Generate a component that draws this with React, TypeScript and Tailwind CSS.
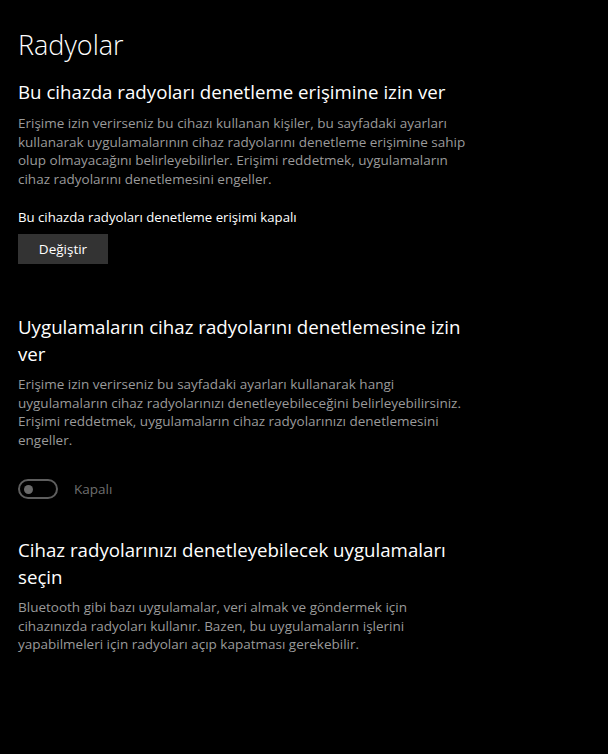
export default function App() {
  return (
    <div
      className="min-h-screen bg-black text-white px-[18px] pt-[27px]"
      style={{ fontFamily: '"Open Sans", "Noto Sans", sans-serif' }}
    >
      <div className="w-[458px]">
        <h1 className="text-[27px] leading-[36px] font-light">Radyolar</h1>

        <h2 className="mt-[15px] text-[18.7px] leading-[27px]">
          Bu cihazda radyoları denetleme erişimine izin ver
        </h2>
        <p className="mt-[9px] text-[13.5px] leading-[18.5px] text-[#9a9a9a]">
          Erişime izin verirseniz bu cihazı kullanan kişiler, bu sayfadaki ayarları kullanarak uygulamalarının cihaz
          radyolarını denetleme erişimine sahip olup olmayacağını belirleyebilirler. Erişimi reddetmek, uygulamaların
          cihaz radyolarını denetlemesini engeller.
        </p>
        <p className="mt-[19px] text-[13.2px] leading-[20px]">Bu cihazda radyoları denetleme erişimi kapalı</p>
        <button className="mt-[7px] w-[90px] h-[30px] bg-[#333333] text-[13.5px] text-white">Değiştir</button>

        <h2 className="mt-[49px] text-[18.7px] leading-[27px]">
          Uygulamaların cihaz radyolarını denetlemesine izin ver
        </h2>
        <p className="mt-[8px] text-[13.5px] leading-[18.5px] text-[#9a9a9a]">
          Erişime izin verirseniz bu sayfadaki ayarları kullanarak hangi uygulamaların cihaz radyolarınızı
          denetleyebileceğini belirleyebilirsiniz. Erişimi reddetmek, uygulamaların cihaz radyolarınızı denetlemesini
          engeller.
        </p>
        <div className="mt-[30px] flex items-center gap-[16px]">
          <div className="w-[40px] h-[20px] rounded-full border-2 border-[#5e5e5e] flex items-center pl-[4px]">
            <div className="w-[9px] h-[9px] rounded-full bg-[#6a6a6a]" />
          </div>
          <span className="text-[13.5px] leading-[20px] text-[#6f6f6f]">Kapalı</span>
        </div>

        <h2 className="mt-[37px] text-[18.7px] leading-[27px]">
          Cihaz radyolarınızı denetleyebilecek uygulamaları seçin
        </h2>
        <p className="mt-[8px] text-[13.5px] leading-[18.5px] text-[#9a9a9a]">
          Bluetooth gibi bazı uygulamalar, veri almak ve göndermek için cihazınızda radyoları kullanır. Bazen, bu
          uygulamaların işlerini yapabilmeleri için radyoları açıp kapatması gerekebilir.
        </p>
      </div>
    </div>
  )
}
